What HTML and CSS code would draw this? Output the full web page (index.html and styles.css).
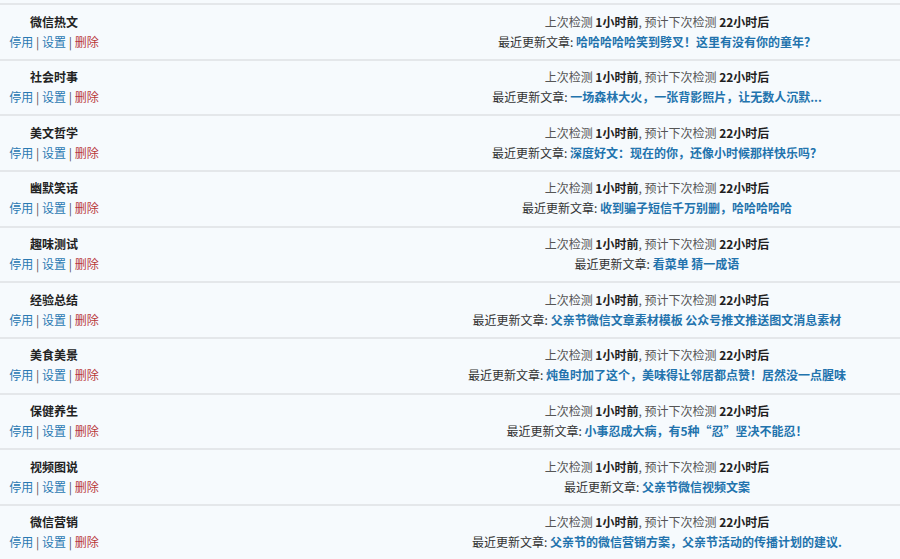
FILE: index.html
```html
<!DOCTYPE html>
<html lang="zh-CN">
<head>
<meta charset="utf-8">
<title>公众号列表</title>
<link rel="stylesheet" href="styles.css">
</head>
<body>
<div class="list">
  <div class="row">
    <div class="name"><div class="title">微信热文</div><div class="ops"><a class="op">停用</a> | <a class="op">设置</a> | <a class="op del">删除</a></div></div>
    <div class="spacer"></div>
    <div class="info"><div>上次检测 <b>1小时前</b>, 预计下次检测 <b>22小时后</b></div><div class="latest">最近更新文章: <a class="art">哈哈哈哈哈笑到劈叉！这里有没有你的童年？</a></div></div>
  </div>
  <div class="row">
    <div class="name"><div class="title">社会时事</div><div class="ops"><a class="op">停用</a> | <a class="op">设置</a> | <a class="op del">删除</a></div></div>
    <div class="spacer"></div>
    <div class="info"><div>上次检测 <b>1小时前</b>, 预计下次检测 <b>22小时后</b></div><div class="latest">最近更新文章: <a class="art">一场森林大火，一张背影照片，让无数人沉默...</a></div></div>
  </div>
  <div class="row">
    <div class="name"><div class="title">美文哲学</div><div class="ops"><a class="op">停用</a> | <a class="op">设置</a> | <a class="op del">删除</a></div></div>
    <div class="spacer"></div>
    <div class="info"><div>上次检测 <b>1小时前</b>, 预计下次检测 <b>22小时后</b></div><div class="latest">最近更新文章: <a class="art">深度好文：现在的你，还像小时候那样快乐吗？</a></div></div>
  </div>
  <div class="row">
    <div class="name"><div class="title">幽默笑话</div><div class="ops"><a class="op">停用</a> | <a class="op">设置</a> | <a class="op del">删除</a></div></div>
    <div class="spacer"></div>
    <div class="info"><div>上次检测 <b>1小时前</b>, 预计下次检测 <b>22小时后</b></div><div class="latest">最近更新文章: <a class="art">收到骗子短信千万别删，哈哈哈哈哈</a></div></div>
  </div>
  <div class="row">
    <div class="name"><div class="title">趣味测试</div><div class="ops"><a class="op">停用</a> | <a class="op">设置</a> | <a class="op del">删除</a></div></div>
    <div class="spacer"></div>
    <div class="info"><div>上次检测 <b>1小时前</b>, 预计下次检测 <b>22小时后</b></div><div class="latest">最近更新文章: <a class="art">看菜单 猜一成语</a></div></div>
  </div>
  <div class="row">
    <div class="name"><div class="title">经验总结</div><div class="ops"><a class="op">停用</a> | <a class="op">设置</a> | <a class="op del">删除</a></div></div>
    <div class="spacer"></div>
    <div class="info"><div>上次检测 <b>1小时前</b>, 预计下次检测 <b>22小时后</b></div><div class="latest">最近更新文章: <a class="art">父亲节微信文章素材模板 公众号推文推送图文消息素材</a></div></div>
  </div>
  <div class="row">
    <div class="name"><div class="title">美食美景</div><div class="ops"><a class="op">停用</a> | <a class="op">设置</a> | <a class="op del">删除</a></div></div>
    <div class="spacer"></div>
    <div class="info"><div>上次检测 <b>1小时前</b>, 预计下次检测 <b>22小时后</b></div><div class="latest">最近更新文章: <a class="art">炖鱼时加了这个，美味得让邻居都点赞！居然没一点腥味</a></div></div>
  </div>
  <div class="row">
    <div class="name"><div class="title">保健养生</div><div class="ops"><a class="op">停用</a> | <a class="op">设置</a> | <a class="op del">删除</a></div></div>
    <div class="spacer"></div>
    <div class="info"><div>上次检测 <b>1小时前</b>, 预计下次检测 <b>22小时后</b></div><div class="latest">最近更新文章: <a class="art">小事忍成大病，有5种“忍”坚决不能忍！</a></div></div>
  </div>
  <div class="row">
    <div class="name"><div class="title">视频图说</div><div class="ops"><a class="op">停用</a> | <a class="op">设置</a> | <a class="op del">删除</a></div></div>
    <div class="spacer"></div>
    <div class="info"><div>上次检测 <b>1小时前</b>, 预计下次检测 <b>22小时后</b></div><div class="latest">最近更新文章: <a class="art">父亲节微信视频文案</a></div></div>
  </div>
  <div class="row">
    <div class="name"><div class="title">微信营销</div><div class="ops"><a class="op">停用</a> | <a class="op">设置</a> | <a class="op del">删除</a></div></div>
    <div class="spacer"></div>
    <div class="info"><div>上次检测 <b>1小时前</b>, 预计下次检测 <b>22小时后</b></div><div class="latest">最近更新文章: <a class="art">父亲节的微信营销方案，父亲节活动的传播计划的建议.</a></div></div>
  </div>
</div>
</body>
</html>
```

FILE: styles.css
```css
html, body {
  margin: 0;
  padding: 0;
  background: #f6fafd;
}
body {
  font-family: "Noto Sans CJK SC", "Noto Sans", sans-serif;
  font-size: 12px;
  line-height: 20px;
  color: #333;
  text-spacing-trim: space-all;
}
.list {
  padding-top: 3px;
}
.row {
  display: grid;
  grid-template-columns: 108px 1fr 486px;
  border-top: 2px solid #e4e7ea;
  padding: 6.5px 0 7.17px;
}
.name {
  text-align: center;
}
.title {
  font-weight: bold;
  color: #222;
}
.ops {
  color: #555;
}
.op {
  color: #2a79b2;
  text-decoration: none;
}
.op.del {
  color: #b8383a;
}
.info {
  text-align: center;
  color: #555;
}
.info b {
  color: #1f1f1f;
}
.latest {
  color: #333;
}
.art {
  color: #2273ad;
  font-weight: bold;
  text-decoration: none;
}
```
